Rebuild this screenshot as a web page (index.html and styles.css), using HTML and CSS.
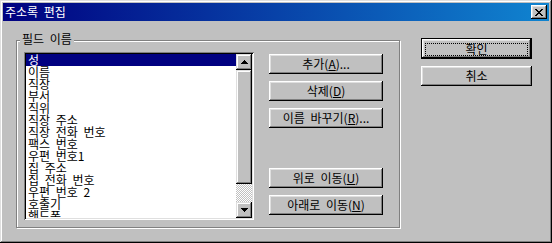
FILE: index.html
```html
<!DOCTYPE html>
<html>
<head>
    <title>주소록 편집</title>
    <link rel="stylesheet" href="styles.css">
</head>
<body>
    <div class="window">
        <!-- 제목 표시줄 -->
        <div class="titlebar">
            <span class="title">주소록 편집</span>
            <button class="close-btn" type="button">
                <svg width="8" height="7" viewBox="0 0 8 7" shape-rendering="crispEdges">
                    <path d="M0 0h2v1H0zM6 0h2v1H6zM1 1h2v1H1zM5 1h2v1H5zM2 2h4v1H2zM3 3h2v1H3zM2 4h4v1H2zM1 5h2v1H1zM5 5h2v1H5zM0 6h2v1H0zM6 6h2v1H6z" fill="#000"/>
                </svg>
            </button>
        </div>

        <div class="dialog-body">
            <!-- 필드 이름 그룹 -->
            <div class="group">
                <span class="group-label">필드 이름</span>
                <div class="listbox">
                    <ul class="list-items">
                        <li class="selected">성</li>
                        <li>이름</li>
                        <li>직장</li>
                        <li>부서</li>
                        <li>직위</li>
                        <li>직장 주소</li>
                        <li>직장 전화 번호</li>
                        <li>팩스 번호</li>
                        <li>우편 번호1</li>
                        <li>집 주소</li>
                        <li>집 전화 번호</li>
                        <li>우편 번호 2</li>
                        <li>호출기</li>
                        <li>핸드폰</li>
                    </ul>
                    <div class="scrollbar">
                        <div class="scroll-btn">
                            <svg width="7" height="4" viewBox="0 0 7 4" shape-rendering="crispEdges">
                                <path d="M3 0h1v1H3zM2 1h3v1H2zM1 2h5v1H1zM0 3h7v1H0z" fill="#000"/>
                            </svg>
                        </div>
                        <div class="scroll-track">
                            <div class="scroll-thumb"></div>
                        </div>
                        <div class="scroll-btn">
                            <svg width="7" height="4" viewBox="0 0 7 4" shape-rendering="crispEdges">
                                <path d="M0 0h7v1H0zM1 1h5v1H1zM2 2h3v1H2zM3 3h1v1H3z" fill="#000"/>
                            </svg>
                        </div>
                    </div>
                </div>
                <div class="group-buttons">
                    <button class="btn" type="button">추가(<u>A</u>)...</button>
                    <button class="btn" type="button">삭제(<u>D</u>)</button>
                    <button class="btn" type="button">이름 바꾸기(<u>R</u>)...</button>
                    <button class="btn btn-gap" type="button">위로 이동(<u>U</u>)</button>
                    <button class="btn" type="button">아래로 이동(<u>N</u>)</button>
                </div>
            </div>

            <!-- 확인 / 취소 -->
            <div class="side-buttons">
                <button class="btn btn-default" type="button">확인</button>
                <button class="btn" type="button">취소</button>
            </div>
        </div>
    </div>
</body>
</html>
```

FILE: styles.css
```css
:root {
    --face: #c0c0c0;
    --light: #dfdfdf;
    --white: #ffffff;
    --shadow: #808080;
    --dark: #000000;
    --navy: #000080;
}

* {
    margin: 0;
    padding: 0;
    box-sizing: border-box;
    font-family: 'Noto Sans CJK KR', 'DejaVu Sans', sans-serif;
    font-size: 12px;
    word-spacing: 3px;
}

body {
    background: var(--face);
    width: 552px;
    height: 243px;
    overflow: hidden;
}

/* 창 테두리 */
.window {
    width: 552px;
    height: 243px;
    padding: 3px;
    background: var(--face);
    box-shadow: inset -1px -1px var(--dark), inset 1px 1px var(--light),
                inset -2px -2px var(--shadow), inset 2px 2px var(--white);
}

/* 제목 표시줄 */
.titlebar {
    height: 18px;
    display: flex;
    align-items: center;
    justify-content: space-between;
    padding: 0 2px 0 2px;
    background: linear-gradient(90deg, #000080 0%, #1084d0 100%);
}

.title {
    color: var(--white);
    line-height: 18px;
}

.close-btn {
    width: 16px;
    height: 14px;
    border: none;
    background: var(--face);
    display: flex;
    align-items: center;
    justify-content: center;
    box-shadow: inset -1px -1px var(--dark), inset 1px 1px var(--white),
                inset -2px -2px var(--shadow), inset 2px 2px var(--light);
}

.close-btn svg {
    display: block;
}

/* 본문 */
.dialog-body {
    display: flex;
    align-items: flex-start;
    padding: 17px 0 0 13px;
}

/* 그룹 상자 */
.group {
    position: relative;
    width: 384px;
    height: 188px;
    margin-top: 2px;
    display: flex;
    align-items: flex-start;
    padding: 11px 0 0 7px;
    border: 1px solid var(--shadow);
    box-shadow: inset 1px 1px var(--white), 1px 1px var(--white);
}

.group-label {
    position: absolute;
    top: -9px;
    left: 3px;
    padding: 0 2px;
    line-height: 14px;
    background: var(--face);
    color: var(--dark);
}

/* 목록 상자 */
.listbox {
    width: 230px;
    height: 168px;
    display: flex;
    padding: 2px;
    background: var(--white);
    box-shadow: inset 1px 1px var(--shadow), inset -1px -1px var(--white),
                inset 2px 2px var(--dark), inset -2px -2px var(--light);
}

.list-items {
    flex: 1;
    list-style: none;
    overflow: hidden;
}

.list-items li {
    height: 12px;
    line-height: 12px;
    padding-left: 2px;
    color: var(--dark);
    white-space: nowrap;
}

.list-items li.selected {
    background: var(--navy);
    color: var(--white);
}

/* 스크롤 막대 */
.scrollbar {
    width: 16px;
    display: flex;
    flex-direction: column;
}

.scroll-btn,
.scroll-thumb {
    background: var(--face);
    box-shadow: inset -1px -1px var(--dark), inset 1px 1px var(--light),
                inset -2px -2px var(--shadow), inset 2px 2px var(--white);
}

.scroll-btn {
    height: 16px;
    display: flex;
    align-items: center;
    justify-content: center;
}

.scroll-btn svg {
    display: block;
}

.scroll-track {
    flex: 1;
    background: repeating-conic-gradient(var(--face) 0 25%, var(--white) 0 50%) 0 0 / 2px 2px;
}

.scroll-thumb {
    height: 114px;
}

/* 버튼 */
.group-buttons {
    display: flex;
    flex-direction: column;
    gap: 7px;
    margin-left: 15px;
    padding-top: 2px;
}

.btn {
    position: relative;
    width: 114px;
    height: 20px;
    border: none;
    background: var(--face);
    color: var(--dark);
    line-height: 18px;
    text-align: center;
    box-shadow: inset -1px -1px var(--dark), inset 1px 1px var(--white),
                inset -2px -2px var(--shadow), inset 2px 2px var(--light);
}

.btn u {
    text-underline-offset: 1px;
}

.btn-gap {
    margin-top: 33px;
}

.side-buttons {
    display: flex;
    flex-direction: column;
    gap: 7px;
    margin-left: 21px;
}

.side-buttons .btn {
    width: 111px;
}

.btn-default {
    height: 21px;
    border: 1px solid var(--dark);
}

.btn-default::after {
    content: '';
    position: absolute;
    top: 4px;
    left: 3px;
    right: 3px;
    bottom: 2px;
    border: 1px dotted var(--dark);
}
```
